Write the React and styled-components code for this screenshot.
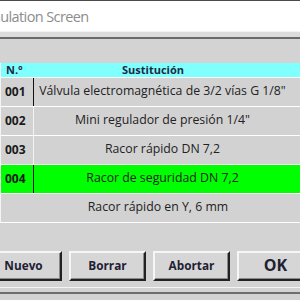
import React from "react";
import styled, { createGlobalStyle } from "styled-components";

const GlobalStyle = createGlobalStyle`
  html, body {
    margin: 0;
    padding: 0;
    width: 300px;
    height: 300px;
    overflow: hidden;
    background: #3a3a3a;
  }
`;

const Window = styled.div`
  display: flex;
  flex-direction: column;
  width: 340px;
  height: 300px;
  margin-left: -16px;
  background: #d3d3d3;
  border-top: 1px solid #4a4a4a;
  box-sizing: border-box;
  font-family: "Open Sans", "Noto Sans", sans-serif;
  overflow: hidden;
`;

const TitleBar = styled.div`
  display: flex;
  align-items: center;
  height: 30px;
  background: #ffffff;
  flex-shrink: 0;
`;

const Title = styled.span`
  margin-left: -7px;
  font-size: 14.5px;
  letter-spacing: -0.6px;
  color: #8c8c8c;
`;

const Frame = styled.div`
  height: 5px;
  flex-shrink: 0;
  background: #dcdcdc;
  border-top: 1px solid #f2f2f2;
  border-bottom: 2px solid #6a6a6a;
`;

const Body = styled.div`
  display: flex;
  flex-direction: column;
  flex: 1;
  padding-top: 24px;
`;

const Table = styled.div`
  display: flex;
  flex-direction: column;
  width: 314px;
  margin-left: 16px;
  border-left: 1px solid #f4f4f4;
`;

const HeaderRow = styled.div`
  display: flex;
  height: 14px;
  background: #80ffff;
  border-bottom: 1px solid #ffffff;
  font-size: 11px;
  font-weight: 700;
  color: #1c2a45;
  line-height: 14px;
`;

const HeadNum = styled.div`
  width: 29px;
  padding-left: 5px;
  flex-shrink: 0;
`;

const HeadDesc = styled.div`
  flex: 1;
  text-align: center;
  padding-right: 44px;
`;

const Row = styled.div`
  display: flex;
  height: 28px;
  background: ${(p) => (p.selected ? "#00ff00" : "#d2d2d2")};
  border-bottom: 1px solid #ffffff;
  align-items: center;
  color: #222222;
`;

const NumCell = styled.div`
  width: 33px;
  height: 100%;
  flex-shrink: 0;
  display: flex;
  align-items: center;
  padding-left: 4px;
  padding-bottom: 2px;
  box-sizing: border-box;
  font-size: 12px;
  font-weight: 700;
  color: #1a1a1a;
  border-right: 1px solid ${(p) => (p.dark ? "#111111" : "#f4f4f4")};
`;

const DescCell = styled.div`
  flex: 1;
  text-align: center;
  font-size: 12.3px;
  padding-right: ${(p) => p.pr}px;
  padding-bottom: 3px;
  white-space: nowrap;
`;

const Buttons = styled.div`
  display: flex;
  gap: 7px;
  padding-left: 1px;
  margin-top: 28px;
`;

const Button = styled.button`
  width: 77px;
  height: 30px;
  flex-shrink: 0;
  background: #d6d6d6;
  border-top: 2px solid #f6f6f6;
  border-left: 2px solid #f6f6f6;
  border-right: 2px solid #222222;
  border-bottom: 2px solid #222222;
  box-shadow: inset -1px -1px 0 #8a8a8a;
  font-family: "Open Sans", "Noto Sans", sans-serif;
  font-weight: 700;
  font-size: ${(p) => (p.big ? 16 : 11.8)}px;
  color: #1f2133;
  padding: 0 0 2px 0;
`;

const Footer = styled.div`
  margin-top: 6px;
  height: 4px;
  border-top: 1px solid #f4f4f4;
  border-bottom: 2px solid #6e6e6e;
`;

const items = [
  { n: "001", d: "Válvula electromagnética de 3/2 vías G 1/8\"", dark: true },
  { n: "002", d: "Mini regulador de presión 1/4\"" },
  { n: "003", d: "Racor rápido DN 7,2" },
  { n: "004", d: "Racor de seguridad DN 7,2", dark: true, selected: true },
];

export default function App() {
  return (
    <>
      <GlobalStyle />
      <Window>
        <TitleBar>
          <Title>Simulation Screen</Title>
        </TitleBar>
        <Frame />
        <Body>
          <Table>
            <HeaderRow>
              <HeadNum>N.°</HeadNum>
              <HeadDesc>Sustitución</HeadDesc>
            </HeaderRow>
            {items.map((it) => (
              <Row key={it.n} selected={it.selected}>
                <NumCell dark={it.dark}>{it.n}</NumCell>
                <DescCell pr={24}>{it.d}</DescCell>
              </Row>
            ))}
            <Row>
              <DescCell pr={0}>Racor rápido en Y, 6 mm</DescCell>
            </Row>
          </Table>
          <Buttons>
            <Button>Nuevo</Button>
            <Button>Borrar</Button>
            <Button>Abortar</Button>
            <Button big>OK</Button>
          </Buttons>
          <Footer />
        </Body>
      </Window>
    </>
  );
}
